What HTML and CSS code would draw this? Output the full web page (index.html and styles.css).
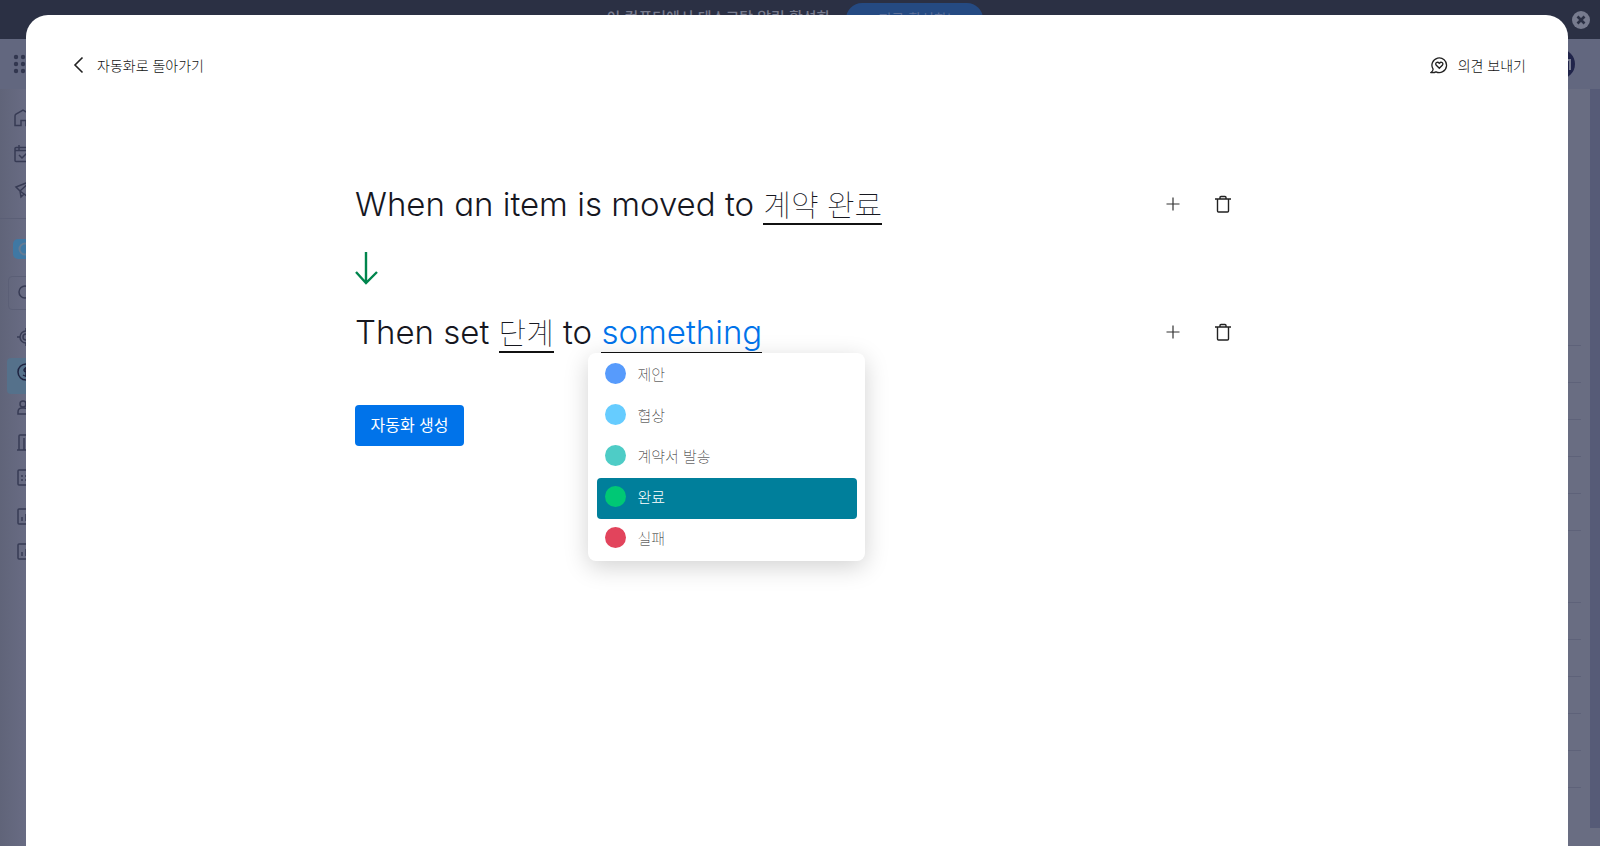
FILE: index.html
```html
<!DOCTYPE html>
<html lang="ko">
<head>
<meta charset="utf-8">
<title>자동화</title>
<link rel="stylesheet" href="styles.css">
</head>
<body>
<div class="app">
  <div class="banner">
    <span>이 컴퓨터에서 데스크탑 알림 활성화</span>
    <button class="banner-action">지금 활성화!</button>
    <button class="banner-close" aria-label="닫기">
      <svg width="18" height="18" viewBox="0 0 18 18"><circle cx="9" cy="9" r="9" fill="#777b8e"/><path d="M5.500 5.500l7 7M12.500 5.500l-7 7" stroke="#2b3044" stroke-width="2.600"/></svg>
    </button>
  </div>
  <div class="topbar">
    <svg width="20" height="20" viewBox="0 0 20 20" fill="#32374f"><circle cx="3" cy="3" r="2.200"/><circle cx="10" cy="3" r="2.200"/><circle cx="17" cy="3" r="2.200"/><circle cx="3" cy="10" r="2.200"/><circle cx="10" cy="10" r="2.200"/><circle cx="17" cy="10" r="2.200"/><circle cx="3" cy="17" r="2.200"/><circle cx="10" cy="17" r="2.200"/><circle cx="17" cy="17" r="2.200"/></svg>
    <span class="avatar"><svg width="30" height="30" viewBox="0 0 30 30" fill="none" stroke="#777b90" stroke-width="2"><path d="M14 20l9-9h2v10"/></svg></span>
  </div>
  <div class="workspace">
    <nav class="sidebar">
      <a class="nav-item" href="#" aria-label="홈"><svg class="icon" viewBox="0 0 20 20"><path d="M1 17.500V8q0-1 1-1.800L9 2l7 4.200q1 .8 1 1.800v9.500h-5v-5H7v5z"/></svg></a>
      <a class="nav-item" href="#" aria-label="내 작업"><svg class="icon" viewBox="0 0 20 20"><rect x="1" y="3.500" width="17" height="14" rx="1"/><path d="M1 6.500h17M5 1v5M14 1v5M5 11l3 3 5-5"/></svg></a>
      <a class="nav-item" href="#" aria-label="메일"><svg class="icon" viewBox="0 0 20 20"><path d="M2 7L17 1l-3 16-4-3-3 3-1-6zM6 11l11-10M10 14l-4-3M2 7l4 4"/></svg></a>
      <hr class="rule">
      <span class="logo"><svg width="20" height="20" viewBox="0 0 20 20" fill="none" stroke="#657b94" stroke-width="2"><circle cx="12" cy="10" r="5.500"/></svg></span>
      <span class="search"><svg class="icon" viewBox="0 0 20 20"><circle cx="7" cy="9" r="6"/><path d="M12 14l4 4"/></svg></span>
      <a class="nav-item board" href="#" aria-label="리드"><svg class="icon" viewBox="0 0 20 20"><circle cx="9" cy="10" r="6"/><circle cx="9" cy="10" r="3"/><path d="M0 10h3M9 1v3M9 16v3"/></svg></a>
      <a class="nav-item board selected" href="#" aria-label="거래"><svg class="icon" viewBox="0 0 20 20"><circle cx="9" cy="10" r="8"/><path d="M12 7q-3-2-4.500 0T9 10t1.500 3T6 13M9 5v10"/></svg></a>
      <a class="nav-item board" href="#" aria-label="연락처"><svg class="icon" viewBox="0 0 20 20"><circle cx="6" cy="6" r="3"/><path d="M1 16v-2q0-4 4-4h2q4 0 4 4v2z"/></svg></a>
      <a class="nav-item board" href="#" aria-label="계정"><svg class="icon" viewBox="0 0 20 20"><path d="M0 17h18M2 17V3q0-1 1-1h11v15M7 17V5M10 17v-3h3M10 6v1M10 10v1"/></svg></a>
      <a class="nav-item board" href="#" aria-label="제품"><svg class="icon" viewBox="0 0 20 20"><rect x="1" y="2" width="16" height="15" rx="1"/><path d="M4 8h2M8 8h2M4 12h2M8 12h2"/></svg></a>
      <a class="nav-item board" href="#" aria-label="대시보드"><svg class="icon" viewBox="0 0 20 20"><rect x="1" y="2" width="16" height="15" rx="1"/><path d="M5 14v-4M9 14V7M13 14V9"/></svg></a>
      <a class="nav-item board" href="#" aria-label="보고서"><svg class="icon" viewBox="0 0 20 20"><rect x="1" y="2" width="16" height="15" rx="1"/><path d="M5 14v-4M9 14V7M13 14V9"/></svg></a>
    </nav>
    <div class="table-lines">
      <i></i><i></i><i></i><i></i><i></i><i></i><i class="gap"></i><i></i><i></i><i></i><i></i><i></i>
    </div>
    <div class="scrollbar"></div>
  </div>
</div>

<main class="modal" role="dialog" aria-label="자동화 편집">
  <header class="modal-header">
    <button class="text-button back">
      <svg width="12" height="18" viewBox="0 0 12 18" fill="none" stroke="#222" stroke-width="1.600"><path d="M9.500 1.500L2 9l7.500 7.500"/></svg>
      자동화로 돌아가기
    </button>
    <button class="text-button">
      <svg width="18" height="18" viewBox="0 0 18 18" fill="none" stroke="#222" stroke-width="1.300"><path d="M3.100 13.200A7.300 7.300 0 1 1 6 15.800Q4 16.800 1 16.500Q3 15 3.100 13.200z"/><path d="M9.300 12.300L6.300 9.300q-1.300-1.700.2-2.800 1.500-.8 2.800.8 1.300-1.600 2.800-.8 1.500 1.100.2 2.800z"/></svg>
      의견 보내기
    </button>
  </header>
  <section class="recipe">
    <div class="step">
      <p class="sentence">When an item is moved to <button class="field">계약 완료</button></p>
      <div class="actions">
        <button class="icon-button" aria-label="추가"><svg width="18" height="18" viewBox="0 0 18 18" fill="none" stroke="#333" stroke-width="1.200"><path d="M2.500 9h13M9 2.500v13"/></svg></button>
        <button class="icon-button" aria-label="삭제"><svg width="18" height="18" viewBox="0 0 18 18" fill="none" stroke="#222" stroke-width="1.400"><path d="M1 4h16M3.500 4v12q0 1 1 1h9q1 0 1-1V4M6 4V2.500q0-1 1-1h4q1 0 1 1V4"/></svg></button>
      </div>
    </div>
    <svg class="arrow" width="24" height="34" viewBox="0 0 24 34" fill="none" stroke="#00854d" stroke-width="2.400"><path d="M11 1v30M1 21l10 11 11-11"/></svg>
    <div class="step">
      <p class="sentence">Then set <button class="field">단계</button> to
        <span class="picker">
          <button class="field open" aria-haspopup="listbox" aria-expanded="true">something</button>
          <span class="menu" role="listbox">
            <button class="option" role="option"><i class="dot blue"></i>제안</button>
            <button class="option" role="option"><i class="dot sky"></i>협상</button>
            <button class="option" role="option"><i class="dot teal"></i>계약서 발송</button>
            <button class="option active" role="option" aria-selected="true"><i class="dot green"></i>완료</button>
            <button class="option" role="option"><i class="dot red"></i>실패</button>
          </span>
        </span>
      </p>
      <div class="actions">
        <button class="icon-button" aria-label="추가"><svg width="18" height="18" viewBox="0 0 18 18" fill="none" stroke="#333" stroke-width="1.200"><path d="M2.500 9h13M9 2.500v13"/></svg></button>
        <button class="icon-button" aria-label="삭제"><svg width="18" height="18" viewBox="0 0 18 18" fill="none" stroke="#222" stroke-width="1.400"><path d="M1 4h16M3.500 4v12q0 1 1 1h9q1 0 1-1V4M6 4V2.500q0-1 1-1h4q1 0 1 1V4"/></svg></button>
      </div>
    </div>
    <button class="create">자동화 생성</button>
  </section>
</main>
</body>
</html>
```
FILE: styles.css
```css
* { box-sizing: border-box; }
body {
  margin: 0;
  height: 100vh;
  overflow: hidden;
  font-family: "Noto Sans CJK KR", sans-serif;
  font-size: 14px;
  color: #222;
}
button {
  margin: 0;
  padding: 0;
  border: 0;
  background: none;
  font: inherit;
  color: inherit;
  cursor: pointer;
}
svg { display: block; flex: none; }

.app {
  height: 100%;
  display: flex;
  flex-direction: column;
  background: #696d82;
}
.banner {
  position: relative;
  flex: none;
  height: 39px;
  display: flex;
  align-items: flex-start;
  justify-content: center;
  gap: 16px;
  padding: 3px 10px 0 0;
  background: #2b3044;
  color: #777b8e;
  font-size: 15px;
  font-weight: 500;
  line-height: 28px;
}
.banner-action {
  width: 137px;
  height: 32px;
  padding-bottom: 2px;
  border-radius: 16px;
  background: #254a82;
  color: #5d7099;
  font-size: 14px;
  font-weight: 400;
}
.banner-close {
  position: absolute;
  top: 11px;
  right: 10px;
}
.topbar {
  flex: none;
  height: 50px;
  display: flex;
  align-items: center;
  justify-content: space-between;
  padding: 0 25px 0 13px;
  background: #62677f;
}
.avatar {
  width: 30px;
  height: 30px;
  border-radius: 50%;
  background: #20244a;
}
.workspace {
  flex: 1;
  display: flex;
  justify-content: space-between;
}
.sidebar {
  width: 280px;
  padding-top: 11px;
  display: flex;
  flex-direction: column;
  background: linear-gradient(90deg, #606479, #696c84 28px);
}
.nav-item {
  flex: none;
  height: 36px;
  display: flex;
  align-items: center;
  padding-left: 14px;
}
.icon {
  width: 20px;
  height: 20px;
  fill: none;
  stroke: #373b54;
  stroke-width: 1.5;
}
.rule {
  width: 100%;
  margin: 10px 0 20px;
  border: 0;
  border-top: 1px solid #5b5f76;
}
.logo {
  flex: none;
  width: 20px;
  height: 20px;
  margin-left: 13px;
  border-radius: 5px;
  background: #3f78a3;
}
.search {
  flex: none;
  height: 34px;
  margin: 17px 8px 9px;
  padding: 6px 9px;
  border: 1px solid #5b5f76;
  border-radius: 4px;
}
.board {
  height: 35px;
  margin-left: 7px;
  padding-left: 10px;
}
.board:nth-last-child(2) { margin-top: 4px; }
.selected {
  height: 36px;
  margin-top: 4px;
  margin-bottom: -4px;
  padding-bottom: 8px;
  border-radius: 4px;
  background: #55718b;
}
.selected .icon { stroke: #1f2340; }

.table-lines {
  flex: 1;
  padding-top: 220px;
  background: #696d82;
}
.table-lines i {
  display: block;
  height: 37px;
  margin-right: 9px;
  border-bottom: 1px solid #5e6279;
}
.table-lines .gap { margin-top: 35px; }
.scrollbar {
  width: 10px;
  margin-bottom: 18px;
  background: #565b77;
}

.modal {
  position: absolute;
  inset: 15px 32px 0 26px;
  padding-top: 40px;
  border-radius: 22px 22px 0 0;
  background: #fff;
}
.modal-header {
  display: flex;
  justify-content: space-between;
  padding: 0 42px 0 47px;
}
.text-button {
  display: flex;
  align-items: center;
  gap: 10px;
  height: 20px;
  font-size: 14px;
  font-weight: 300;
  line-height: 20px;
  color: #111;
}
.back { gap: 12px; }

.recipe {
  width: 100%;
  max-width: 884px;
  margin: 108px auto 0;
}
.step {
  display: flex;
  align-items: center;
  justify-content: space-between;
  height: 42px;
}
.sentence {
  margin: 0;
  font-family: Inter, "Noto Sans CJK KR", sans-serif;
  font-size: 33px;
  font-weight: 300;
  font-feature-settings: "cv11";
  line-height: 42px;
  color: #16171f;
}
.field {
  border-bottom: 2px solid #111;
  font-family: "Noto Sans CJK KR", sans-serif;
  font-size: 30px;
  font-weight: 100;
  line-height: 40px;
}
.field.open {
  border-bottom-width: 1px;
  font: inherit;
  line-height: 40px;
  color: #0073ea;
}
.picker {
  position: relative;
  display: inline-block;
}
.menu {
  position: absolute;
  top: 100%;
  left: -13px;
  width: 277px;
  padding: 2px 8px 1px 9px;
  border-radius: 8px;
  background: #fff;
  box-shadow: 0 6px 24px rgba(0, 0, 0, 0.18);
}
.option {
  width: 100%;
  height: 41px;
  display: flex;
  align-items: center;
  gap: 11px;
  padding: 0 8px 4px;
  border-radius: 4px;
  font-family: "Noto Sans CJK KR", sans-serif;
  font-size: 15px;
  line-height: 20px;
  font-weight: 100;
  color: #222;
}
.option.active {
  background: #007f9b;
  font-weight: 300;
  color: #fff;
}
.dot {
  width: 21px;
  height: 21px;
  border-radius: 50%;
}
.blue { background: #579bfc; }
.sky { background: #66ccff; }
.teal { background: #4eccc6; }
.green { background: #00c875; }
.red { background: #e2445c; }

.actions {
  display: flex;
  gap: 32px;
  padding-right: 7px;
}
.arrow { margin: 26px 0; }
.create {
  width: 109px;
  height: 41px;
  margin-top: 52px;
  padding-bottom: 3px;
  border-radius: 4px;
  background: #0073ea;
  color: #fff;
  font-size: 16px;
}
```
